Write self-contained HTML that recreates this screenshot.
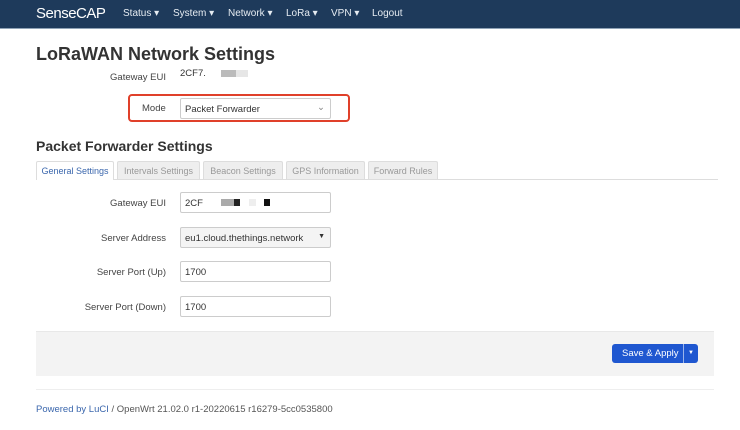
<!DOCTYPE html><html><head><style>
body{margin:0;width:740px;height:430px;background:#fff;font-family:"Liberation Sans",sans-serif;color:#333;position:relative;overflow:hidden}
.nav{position:absolute;left:0;top:0;width:740px;height:28px;background:#1e3a5b;border-bottom:1px solid #8fa2b6}
.nav span{position:absolute;top:8px;color:#e6ecf2;font-size:10px;white-space:nowrap}
.abs{position:absolute;white-space:nowrap}
.lbl{position:absolute;font-size:9.5px;color:#444;text-align:right;width:130px;left:36px;white-space:nowrap}
.inp{position:absolute;left:180px;width:151px;height:21px;border:1px solid #ccc;border-radius:2px;box-sizing:border-box;font-size:9.5px;padding:5px 4px;color:#333;white-space:nowrap}
.tab{position:absolute;top:161px;height:18px;font-size:9px;color:#999;background:#eee;border:1px solid #ddd;border-bottom:none;box-sizing:border-box;padding:4px 0;text-align:center;border-radius:2px 2px 0 0;white-space:nowrap;overflow:hidden}
</style></head><body>
<div class="nav">
<span style="left:36px;top:5px;font-size:15px;color:#fff;letter-spacing:-0.5px">SenseCAP</span>
<span style="left:123px">Status ▾</span>
<span style="left:173px">System ▾</span>
<span style="left:228px">Network ▾</span>
<span style="left:286px">LoRa ▾</span>
<span style="left:331px">VPN ▾</span>
<span style="left:372px">Logout</span>
</div>
<div class="abs" style="left:36px;top:44px;font-size:18px;font-weight:bold;color:#333">LoRaWAN Network Settings</div>
<div class="lbl" style="top:72px">Gateway EUI</div>
<div class="abs" style="left:180px;top:68px;font-size:9.5px">2CF7.</div>
<div class="abs" style="left:221px;top:70px;width:15px;height:7px;background:#bbb"></div>
<div class="abs" style="left:236px;top:70px;width:12px;height:7px;background:#e6e6e6"></div>
<div class="abs" style="left:128px;top:94px;width:222px;height:28px;border:2.5px solid #e0402a;border-radius:4px;box-sizing:border-box"></div>
<div class="abs" style="left:142px;top:103px;font-size:9.5px;color:#444">Mode</div>
<div class="inp" style="top:98px;background:#fff">Packet Forwarder<span style="position:absolute;right:5px;top:3px;color:#888">⌄</span></div>
<div class="abs" style="left:36px;top:138px;font-size:14px;font-weight:bold;color:#333">Packet Forwarder Settings</div>
<div class="abs" style="left:36px;top:179px;width:682px;height:1px;background:#ddd"></div>
<div class="tab" style="left:36px;background:#fff;color:#3b67ad;width:78px;height:19px">General Settings</div>
<div class="tab" style="left:117px;width:83px">Intervals Settings</div>
<div class="tab" style="left:203px;width:80px">Beacon Settings</div>
<div class="tab" style="left:286px;width:79px">GPS Information</div>
<div class="tab" style="left:368px;width:70px">Forward Rules</div>
<div class="lbl" style="top:198px">Gateway EUI</div>
<div class="inp" style="top:192px">2CF</div>
<div class="abs" style="left:221px;top:199px;width:16px;height:7px;background:#aaa"></div>
<div class="abs" style="left:234px;top:199px;width:6px;height:7px;background:#222"></div>
<div class="abs" style="left:249px;top:199px;width:7px;height:7px;background:#eee"></div>
<div class="abs" style="left:264px;top:199px;width:6px;height:7px;background:#111"></div>
<div class="lbl" style="top:233px">Server Address</div>
<div class="inp" style="top:227px;background:#f4f4f4">eu1.cloud.thethings.network<span style="position:absolute;right:5px;top:5px;font-size:7px">▼</span></div>
<div class="lbl" style="top:267px">Server Port (Up)</div>
<div class="inp" style="top:261px">1700</div>
<div class="lbl" style="top:302px">Server Port (Down)</div>
<div class="inp" style="top:296px">1700</div>
<div class="abs" style="left:36px;top:331px;width:678px;height:44px;background:#f3f3f3;border-top:1px solid #e8e8e8"></div>
<div class="abs" style="left:612px;top:344px;width:86px;height:19px;background:#1f57d0;border-radius:3px"></div>
<div class="abs" style="left:622px;top:348px;font-size:9.5px;color:#fff">Save &amp; Apply</div>
<div class="abs" style="left:683px;top:344px;width:1px;height:19px;background:#9bb4ea"></div>
<div class="abs" style="left:688px;top:350px;font-size:6px;color:#fff">▼</div>
<div class="abs" style="left:36px;top:389px;width:678px;height:1px;background:#eee"></div>
<div class="abs" style="left:36px;top:404px;font-size:9.5px;color:#555"><span style="color:#3b67ad">Powered by LuCI</span> / OpenWrt 21.02.0 r1-20220615 r16279-5cc0535800</div>
</body></html>
